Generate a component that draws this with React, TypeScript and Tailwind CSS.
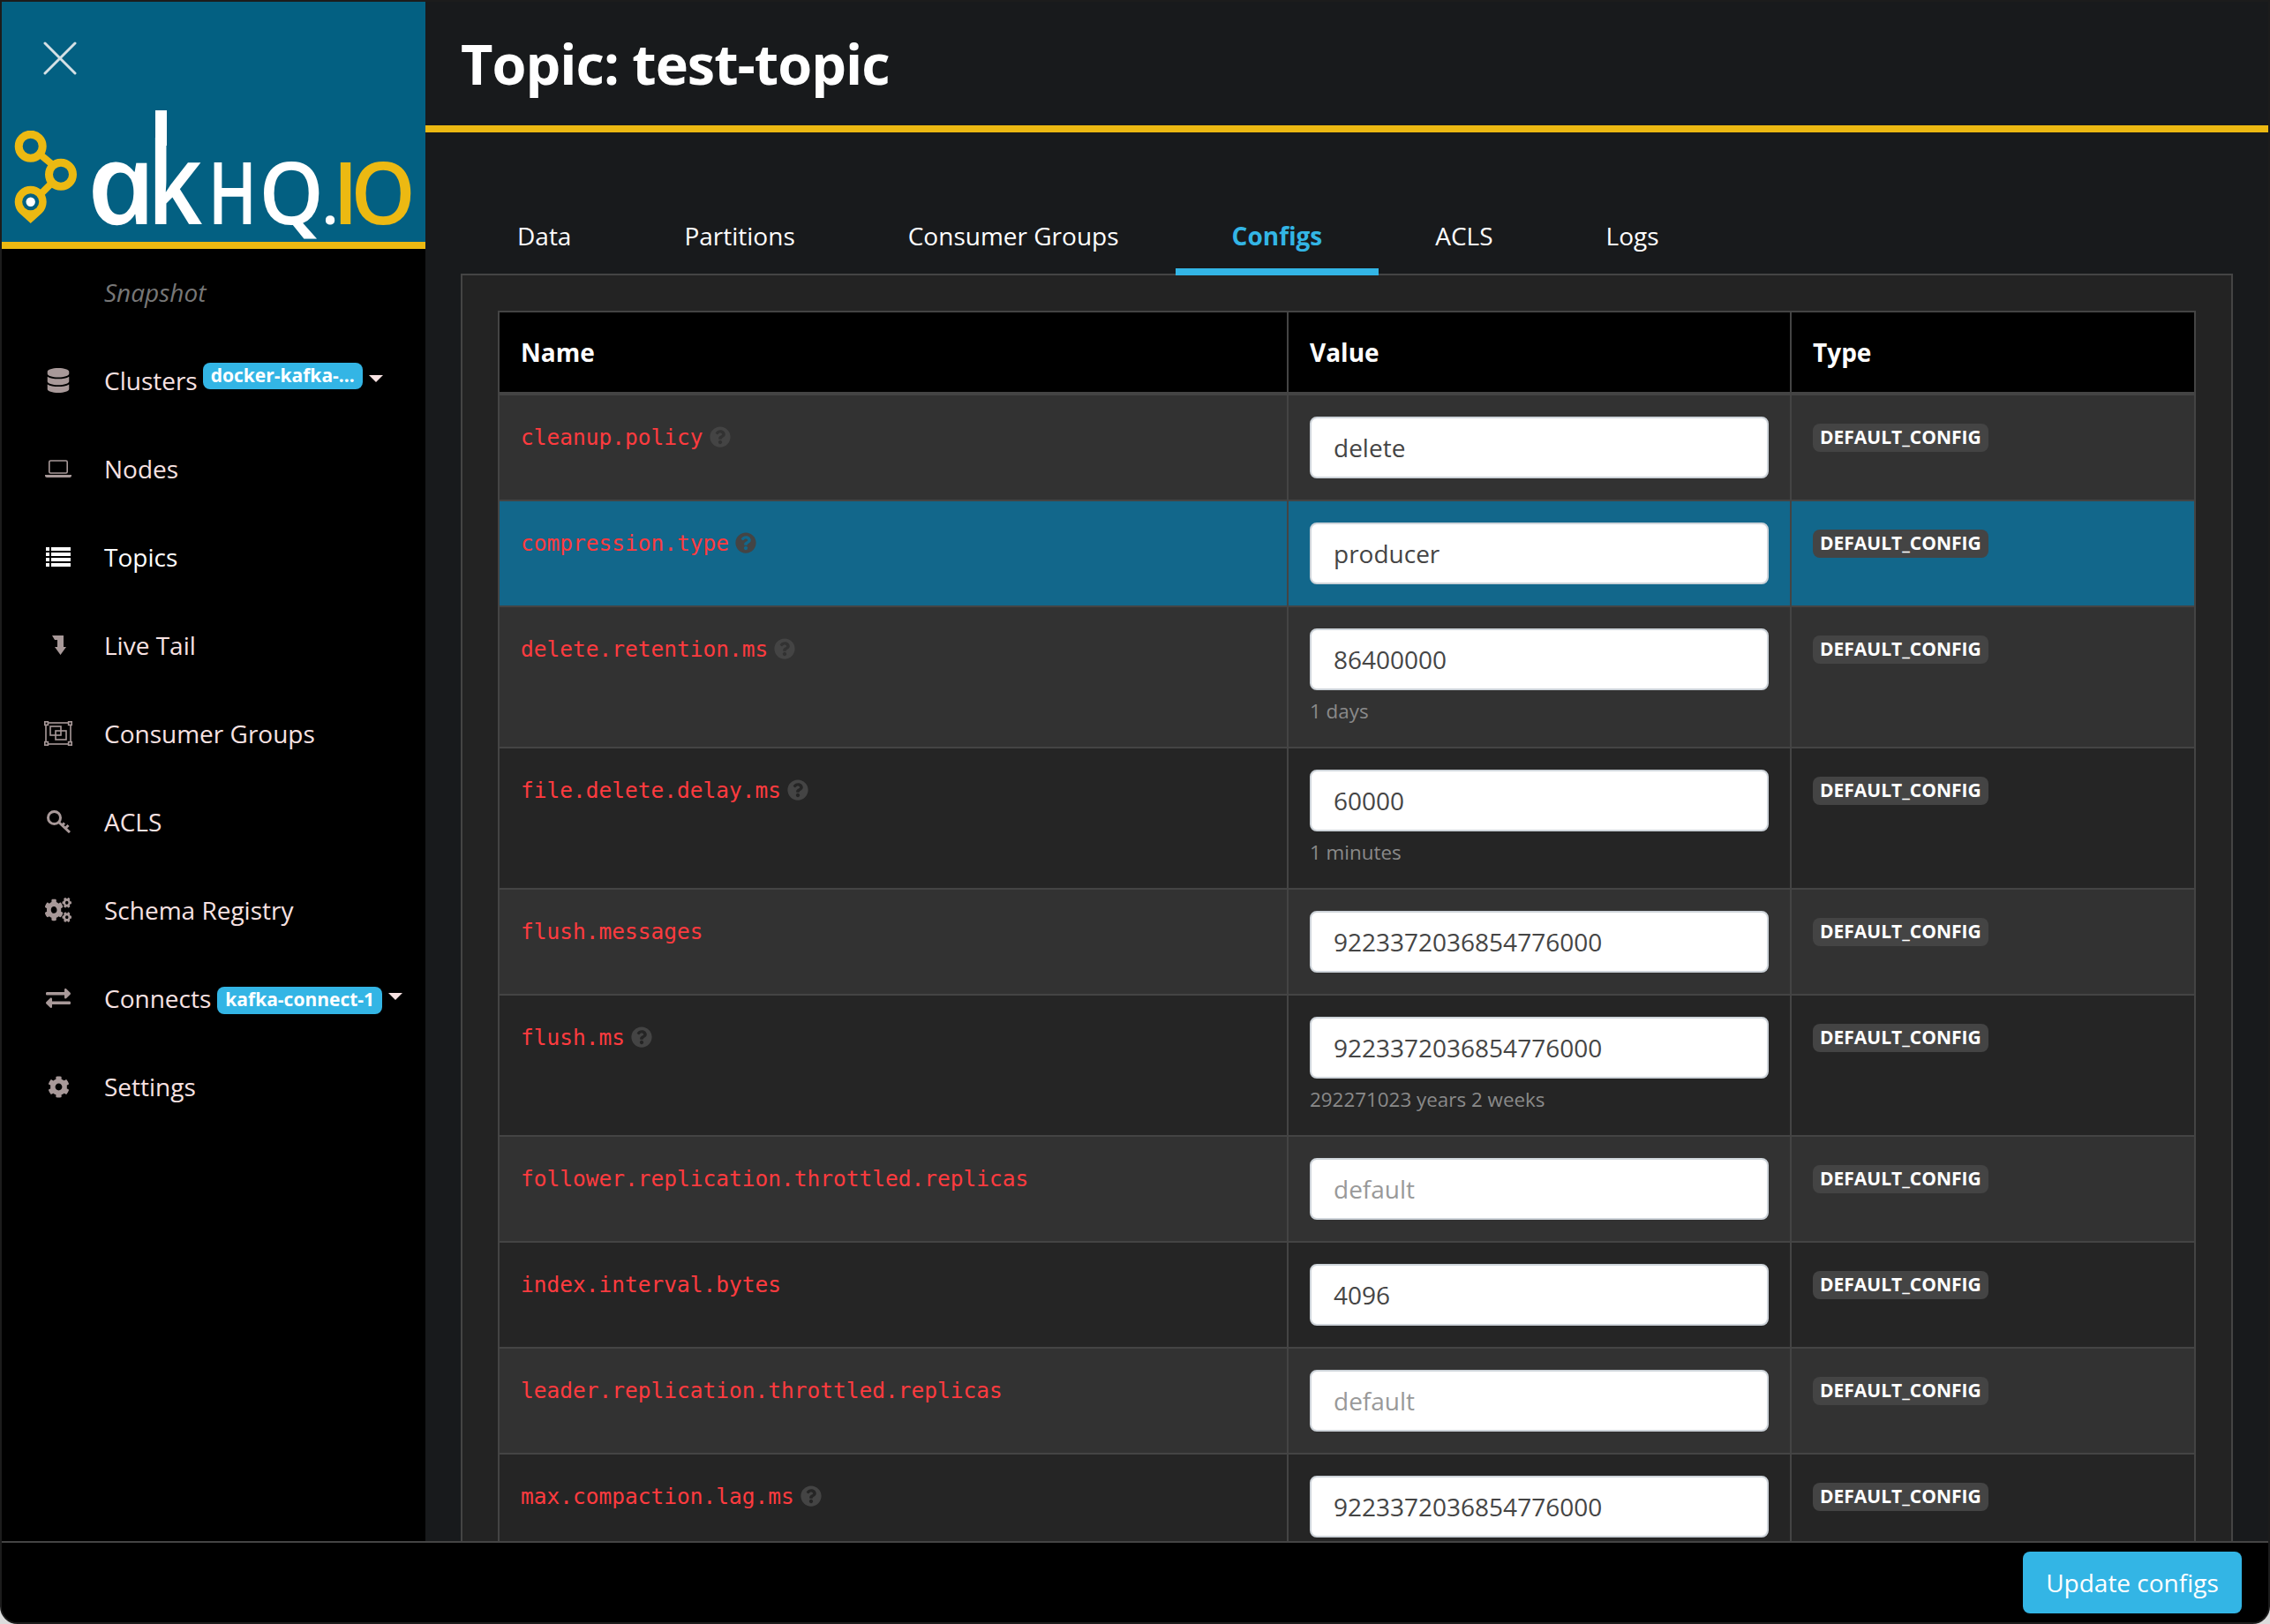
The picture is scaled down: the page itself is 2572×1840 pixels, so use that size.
import { ReactElement } from "react";
import { FaCog, FaCogs, FaDatabase, FaExchangeAlt, FaQuestionCircle } from "react-icons/fa";

type Row = { name: string; value: string; hint?: string; help?: boolean; placeholder?: boolean };

const rows: Row[] = [
  { name: "cleanup.policy", value: "delete", help: true },
  { name: "compression.type", value: "producer", help: true },
  { name: "delete.retention.ms", value: "86400000", hint: "1 days", help: true },
  { name: "file.delete.delay.ms", value: "60000", hint: "1 minutes", help: true },
  { name: "flush.messages", value: "9223372036854776000" },
  { name: "flush.ms", value: "9223372036854776000", hint: "292271023 years 2 weeks", help: true },
  { name: "follower.replication.throttled.replicas", value: "default", placeholder: true },
  { name: "index.interval.bytes", value: "4096" },
  { name: "leader.replication.throttled.replicas", value: "default", placeholder: true },
  { name: "max.compaction.lag.ms", value: "9223372036854776000", help: true },
];

const GroupIcon = () => (
  <svg viewBox="0 0 32 28" className="w-[32px] h-[28px]" fill="none" stroke="currentColor" strokeWidth="1.6">
    <rect x="2" y="2" width="28" height="24" />
    <rect x="0.8" y="0.8" width="3.6" height="3.6" fill="#000" />
    <rect x="27.6" y="0.8" width="3.6" height="3.6" fill="#000" />
    <rect x="0.8" y="23.6" width="3.6" height="3.6" fill="#000" />
    <rect x="27.6" y="23.6" width="3.6" height="3.6" fill="#000" />
    <rect x="7" y="6" width="12" height="10" />
    <rect x="13" y="11" width="12" height="10" />
  </svg>
);

const LaptopIcon = () => (
  <svg viewBox="0 0 30 20" className="w-[30px] h-[20px]" fill="none" stroke="currentColor">
    <rect x="4.8" y="1" width="20.4" height="14" rx="1.5" strokeWidth="1.6" />
    <path d="M0 17h30v1c0 1-1 2-2 2H2c-1 0-2-1-2-2z" fill="currentColor" stroke="none" />
  </svg>
);

const ListIcon = () => (
  <svg viewBox="0 0 28 22" className="w-[28px] h-[22px]" fill="currentColor">
    <rect x="0" y="0" width="4" height="4" />
    <rect x="6" y="0" width="22" height="4" />
    <rect x="0" y="6" width="4" height="4" />
    <rect x="6" y="6" width="22" height="4" />
    <rect x="0" y="12" width="4" height="4" />
    <rect x="6" y="12" width="22" height="4" />
    <rect x="0" y="18" width="4" height="4" />
    <rect x="6" y="18" width="22" height="4" />
  </svg>
);

const TailIcon = () => (
  <svg viewBox="0 0 16 22" className="w-[16px] h-[22px] ml-[2px]" fill="currentColor">
    <path d="M0 0h13v13h3l-6.5 9L3 13h3V5H3z" />
  </svg>
);

const KeyIcon = () => (
  <svg viewBox="0 0 27 26" className="w-[27px] h-[26px]" fill="none" stroke="currentColor" strokeWidth="3">
    <circle cx="8.5" cy="8.5" r="7" />
    <path d="M13.5 13.5L26 25M21 20.5l3.5-3.5M17.5 17l2.5-2.5" />
  </svg>
);

const nav: { label: string; icon: ReactElement; active?: boolean; badge?: string; badgeClass?: string }[] = [
  { label: "Clusters", icon: <FaDatabase size={28} />, badge: "docker-kafka-...", badgeClass: "ml-[6px] mb-[10px] h-[30px]" },
  { label: "Nodes", icon: <LaptopIcon /> },
  { label: "Topics", icon: <ListIcon />, active: true },
  { label: "Live Tail", icon: <TailIcon /> },
  { label: "Consumer Groups", icon: <GroupIcon /> },
  { label: "ACLS", icon: <KeyIcon /> },
  { label: "Schema Registry", icon: <FaCogs preserveAspectRatio="none" className="w-[30px] h-[28px]" /> },
  { label: "Connects", icon: <FaExchangeAlt size={28} />, badge: "kafka-connect-1", badgeClass: "ml-[7px] mt-[4px] h-[31px]" },
  { label: "Settings", icon: <FaCog size={25} /> },
];

const Logo = () => (
  <div className="flex items-end ml-[14px] mt-[39px] h-[129px]">
    <svg viewBox="0 0 72 105" className="w-[72px] h-[105px] shrink-0" fill="none">
      <path d="M27 25L44 39M42 60L30 72" stroke="#ecb912" strokeWidth="8" />
      <circle cx="18.7" cy="17.7" r="13.5" stroke="#ecb912" strokeWidth="9" />
      <circle cx="53" cy="49.7" r="13.5" stroke="#ecb912" strokeWidth="9" />
      <path d="M18.7 105L6 93.5A18 18 0 1 1 31.4 93.5Z" fill="#ecb912" />
      <circle cx="18.7" cy="80.7" r="9.5" fill="#036082" />
      <circle cx="18.7" cy="80.7" r="5.2" fill="#fff" />
    </svg>
    <div className="ml-[14px] -mb-[17px] h-[129px] flex items-baseline font-['Open_Sans',sans-serif] font-semibold text-white leading-none">
      <span className="w-[74px] flex justify-center text-[128px]"><span className="inline-block italic skew-x-[12deg] scale-x-[1.06] -translate-x-[5px]">a</span></span>
      <span className="relative w-[57px] flex justify-start text-[128px]">
        <span className="inline-block origin-left scale-x-[.85] -ml-[9px]">k</span>
        <span className="absolute left-0 bottom-[104px] w-[13px] h-[40px] bg-white" />
      </span>
      <span className="w-[61px] flex justify-center text-[97px]"><span className="inline-block scale-x-[.76]">H</span></span>
      <span className="w-[72px] flex justify-center text-[97px]"><span className="inline-block scale-x-[.96]">Q</span></span>
      <span className="w-[16px] flex justify-center text-[60px] font-bold">.</span>
      <span className="text-[#ecb912] uppercase text-[97px] flex">
        <span className="w-[19px] flex justify-center">i</span>
        <span className="w-[67px] flex justify-center"><span className="inline-block scale-x-[.96]">o</span></span>
      </span>
    </div>
  </div>
);

const Sidebar = () => (
  <aside className="w-[480px] h-full shrink-0 bg-black flex flex-col font-['Open_Sans',sans-serif]">
    <div className="h-[280px] shrink-0 bg-[#036082] border-b-[8px] border-[#ecb912] flex flex-col">
      <svg viewBox="0 0 38 38" className="w-[38px] h-[38px] ml-[47px] mt-[45px] shrink-0" stroke="#d5e0e5" strokeWidth="3" strokeLinecap="round">
        <path d="M2 2L36 36M36 2L2 36" />
      </svg>
      <Logo />
    </div>
    <div className="h-[100px] shrink-0 pl-[116px] pb-[2px] flex items-center text-[28px] italic text-[#777777]">Snapshot</div>
    <nav className="flex flex-col">
      {nav.map((item) => (
        <div key={item.label} className={`h-[100px] pb-[2px] flex items-center ${item.active ? "text-white" : "text-[#f8e2e2]"}`}>
          <div className={`w-[116px] pl-[32px] pr-[20px] flex justify-center ${item.active ? "text-white" : "text-[#a89999]"}`}>{item.icon}</div>
          <span className="text-[28px]">{item.label}</span>
          {item.badge && (
            <>
              <span className={`px-[9px] rounded-[8px] bg-[#33b5e5] text-white text-[21px] font-bold flex items-center whitespace-nowrap ${item.badgeClass}`}>{item.badge}</span>
              <span className="ml-[7px] mb-[4px] w-0 h-0 border-x-[8px] border-x-transparent border-t-[8px] border-t-[#f8e2e2]" />
            </>
          )}
        </div>
      ))}
    </nav>
  </aside>
);

const ConfigRow = ({ row, index }: { row: Row; index: number }) => {
  const bg = index === 1 ? "bg-[#12678b]" : index % 2 === 0 ? "bg-[#323232]" : "bg-[#252525]";
  return (
    <div className={`flex shrink-0 border-b-[2px] border-[#444444] ${bg}`}>
      <div className="w-[894px] shrink-0 border-r-[2px] border-[#444444] p-[24px] pt-[34px] flex items-start">
        <span className="font-['DejaVu_Sans_Mono',monospace] text-[24.5px] leading-[28px] text-[#ff3b3f]">{row.name}</span>
        {row.help && <FaQuestionCircle size={24} className="ml-[7px] mt-[1px] text-[#444444]" />}
      </div>
      <div className="w-[570px] shrink-0 border-r-[2px] border-[#444444] p-[24px]">
        <div className={`h-[70px] rounded-[8px] bg-white border-[2px] border-[#ced4da] pl-[25px] pr-[24px] flex items-center text-[28px] ${row.placeholder ? "text-[#999999]" : "text-[#454545]"}`}>{row.value}</div>
        {row.hint && <div className="mt-[10px] mb-[2px] h-[28px] text-[22.4px] leading-[28px] text-[#8a8a8a]">{row.hint}</div>}
      </div>
      <div className="flex-1 px-[24px] pt-[32px] pb-[24px]">
        <span className="inline-flex items-center h-[32px] px-[8px] rounded-[8px] bg-[#444444] text-white text-[21px] font-bold">DEFAULT_CONFIG</span>
      </div>
    </div>
  );
};

const tabs = ["Data", "Partitions", "Consumer Groups", "Configs", "ACLS", "Logs"];

const Main = () => (
  <main className="flex-1 min-w-0 h-full overflow-hidden bg-[#181a1c] flex flex-col font-['Open_Sans',sans-serif] text-white">
    <header className="h-[148px] shrink-0 border-b-[8px] border-[#ecb912] pl-[40px] flex items-center">
      <h1 className="text-[63px] font-bold tracking-[-1px]">Topic: test-topic</h1>
    </header>
    <div className="flex flex-col mx-[40px] min-h-0 flex-1">
      <div className="flex mt-[86px] h-[76px] shrink-0 relative z-10">
        {tabs.map((tab) => (
          <div key={tab} className={`px-[64px] h-full flex items-center text-[28px] whitespace-nowrap pb-[6px] border-b-[8px] ${tab === "Configs" ? "font-bold text-[#33b5e5] border-[#33b5e5]" : "text-white border-transparent"}`}>{tab}</div>
        ))}
      </div>
      <div className="-mt-[2px] flex-1 min-h-0 overflow-hidden border-x-[2px] border-t-[2px] border-[#444444] bg-[#232323] px-[40px] pt-[40px]">
        <div className="border-x-[2px] border-t-[2px] border-[#444444] flex flex-col">
          <div className="flex shrink-0 h-[94px] bg-black border-b-[4px] border-[#444444] text-[28px] font-bold">
            <div className="w-[894px] shrink-0 border-r-[2px] border-[#444444] px-[24px] flex items-center">Name</div>
            <div className="w-[570px] shrink-0 border-r-[2px] border-[#444444] px-[24px] flex items-center">Value</div>
            <div className="flex-1 px-[24px] flex items-center">Type</div>
          </div>
          {rows.map((row, i) => (
            <ConfigRow key={row.name} row={row} index={i} />
          ))}
        </div>
      </div>
    </div>
  </main>
);

export default function App() {
  return (
    <div className="w-[2572px] h-[1840px] bg-[#dcdcdc] overflow-hidden">
      <div className="w-full h-full bg-black border-[2px] border-[#1c1c1c] rounded-b-[20px] overflow-hidden flex flex-col">
        <div className="flex flex-1 min-h-0">
          <Sidebar />
          <Main />
        </div>
        <footer className="h-[92px] shrink-0 border-t-[2px] border-[#444444] bg-black flex items-center justify-end pr-[30px] font-['Open_Sans',sans-serif]">
          <button className="w-[248px] h-[70px] rounded-[8px] bg-[#33b5e5] text-white text-[28px]">Update configs</button>
        </footer>
      </div>
    </div>
  );
}
